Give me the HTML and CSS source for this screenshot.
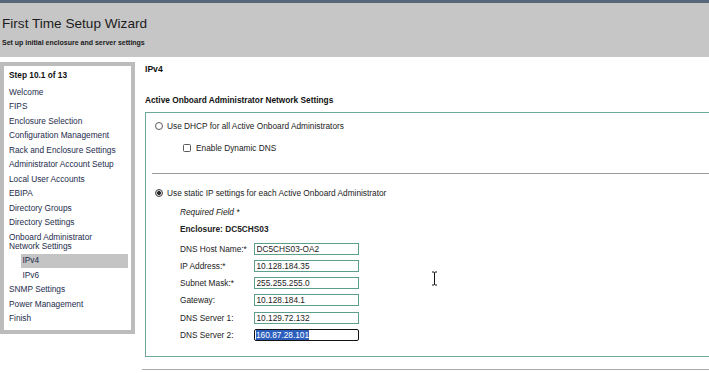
FILE: index.html
```
<!DOCTYPE html>
<html>
<head>
  <title>First Time Setup Wizard</title>
  <link rel="stylesheet" href="styles.css">
</head>
<body>
  <div class="header">
    <h1 class="title">First Time Setup Wizard</h1>
    <div class="subtitle">Set up initial enclosure and server settings</div>
  </div>
  <div class="content">
    <nav class="steps">
      <div class="step-count">Step 10.1 of 13</div>
      <ul class="step-list">
        <li>Welcome</li>
        <li>FIPS</li>
        <li>Enclosure Selection</li>
        <li>Configuration Management</li>
        <li>Rack and Enclosure Settings</li>
        <li>Administrator Account Setup</li>
        <li>Local User Accounts</li>
        <li>EBIPA</li>
        <li>Directory Groups</li>
        <li>Directory Settings</li>
        <li>Onboard Administrator<br>Network Settings</li>
        <li class="sub active">IPv4</li>
        <li class="sub">IPv6</li>
        <li>SNMP Settings</li>
        <li>Power Management</li>
        <li>Finish</li>
      </ul>
    </nav>
    <main class="panel">
      <h2 class="panel-title">IPv4</h2>
      <h3 class="section-title">Active Onboard Administrator Network Settings</h3>
      <div class="settings-box">
        <div class="choice">
          <label class="option"><input type="radio" name="mode">Use DHCP for all Active Onboard Administrators</label>
          <label class="option sub-option"><input type="checkbox">Enable Dynamic DNS</label>
        </div>
        <div class="choice static">
          <label class="option"><input type="radio" name="mode" checked>Use static IP settings for each Active Onboard Administrator</label>
          <div class="details">
            <div class="required">Required Field *</div>
            <div class="enclosure">Enclosure: DC5CHS03</div>
            <div class="field-row"><span class="field-label">DNS Host Name:*</span><input class="field" type="text" value="DC5CHS03-OA2"></div>
            <div class="field-row"><span class="field-label">IP Address:*</span><input class="field" type="text" value="10.128.184.35"></div>
            <div class="field-row"><span class="field-label">Subnet Mask:*</span><input class="field" type="text" value="255.255.255.0"></div>
            <div class="field-row"><span class="field-label">Gateway:</span><input class="field" type="text" value="10.128.184.1"></div>
            <div class="field-row"><span class="field-label">DNS Server 1:</span><input class="field" type="text" value="10.129.72.132"></div>
            <div class="field-row"><span class="field-label">DNS Server 2:</span><span class="field focused"><span class="selected">160.87.28.101</span></span></div>
          </div>
        </div>
      </div>
      <div class="panel-rule"></div>
    </main>
  </div>
  <svg class="cursor" width="7" height="15" viewBox="0 0 7 15">
    <path d="M1 1h2l0.5 0.6L4 1h2M3.5 1.6v11.8M1 14h2l0.5-0.6L4 14h2" fill="none" stroke="#fff" stroke-width="2.4"/>
    <path d="M1 1h2l0.5 0.6L4 1h2M3.5 1.6v11.8M1 14h2l0.5-0.6L4 14h2" fill="none" stroke="#111" stroke-width="1"/>
  </svg>
</body>
</html>
```

FILE: styles.css
```
html, body {
  margin: 0;
  padding: 0;
  height: 100%;
  overflow: hidden;
  background: #fff;
}
body {
  font-family: "Liberation Sans", Arial, sans-serif;
  font-size: 8.3px;
  color: #222;
  position: relative;
}
.header {
  border-top: 3px solid #56677a;
  background-color: #c6c6c6;
  padding: 13px 0 0 2px;
  box-sizing: border-box;
  height: 57px;
}
.title {
  margin: 0;
  font-size: 13.6px;
  font-weight: normal;
  line-height: 16px;
  color: #1c1c1c;
}
.subtitle {
  margin-top: 6px;
  font-size: 7px;
  font-weight: bold;
  line-height: 9px;
  color: #1a1a1a;
}
.content {
  display: flex;
  margin-top: 5px;
}
.steps {
  flex: none;
  width: 135px;
  height: 272px;
  box-sizing: border-box;
  border: 4px solid #bcbcbc;
  padding: 5px 3px 0 0;
  color: #1d2c4c;
}
.step-count {
  padding-left: 5px;
  font-weight: bold;
  line-height: 9px;
  color: #111;
}
.step-list {
  list-style: none;
  margin: 5px 0 0;
  padding: 0;
}
.step-list li {
  padding: 2.75px 0 2.75px 5px;
  line-height: 9px;
}
.step-list li.sub {
  margin-left: 16.5px;
  padding-left: 2px;
}
.step-list li.active {
  background-color: #c4c4c4;
}
.panel {
  flex: 1;
  min-width: 0;
  padding-left: 10px;
}
.panel-title {
  margin: 1px 0 0;
  font-size: 8.6px;
  line-height: 12px;
  color: #111;
}
.section-title {
  margin: 18.5px 0 0;
  font-size: 8.3px;
  line-height: 12px;
  color: #111;
}
.settings-box {
  margin-top: 6.5px;
  border: 1px solid #6fa89b;
  border-right: none;
  padding-bottom: 15.5px;
}
.choice {
  margin-left: 6px;
  padding: 6px 0 18px;
}
.choice.static {
  border-top: 1px solid #9a9a9a;
  padding: 12px 0 0;
}
.option {
  display: flex;
  align-items: center;
  height: 14px;
  gap: 4px;
}
.sub-option {
  margin: 8px 0 0 31px;
  gap: 5px;
}
.option input {
  appearance: none;
  margin: 0;
  width: 8px;
  height: 8px;
  box-sizing: border-box;
  background: #fff;
  border: 1px solid #5a5a5a;
}
.option input[type="radio"] {
  margin-left: 3px;
  border-radius: 50%;
}
.option input[type="radio"]:checked {
  background: radial-gradient(circle, #2b2b2b 0 42%, #d8d8d8 52%);
  border-color: #444;
}
.option input[type="checkbox"] {
  border-radius: 1.5px;
}
.details {
  padding-left: 28px;
}
.required {
  margin-top: 6px;
  line-height: 12px;
  font-style: italic;
}
.enclosure {
  margin-top: 5px;
  line-height: 12px;
  font-weight: bold;
}
.field-row {
  display: flex;
  align-items: center;
  height: 12px;
  margin-top: 5.3px;
}
.enclosure + .field-row {
  margin-top: 7.5px;
}
.field-label {
  width: 73.5px;
  flex: none;
}
.field {
  display: block;
  width: 105px;
  height: 12px;
  box-sizing: border-box;
  margin: 0;
  padding: 0 2px;
  border: 1px solid #5d9f8d;
  font-family: inherit;
  font-size: 8.3px;
  line-height: 10px;
  color: #222;
  background: #fff;
  outline: none;
}
.field.focused {
  border: 1px solid #111;
  border-radius: 2px;
  padding-left: 1.5px;
}
.selected {
  background-color: #2c5fbd;
  color: #fff;
}
.panel-rule {
  margin: 12px 0 0 -3px;
  height: 1px;
  background-color: #aaa;
}
.cursor {
  position: absolute;
  left: 431px;
  top: 271px;
}
```
